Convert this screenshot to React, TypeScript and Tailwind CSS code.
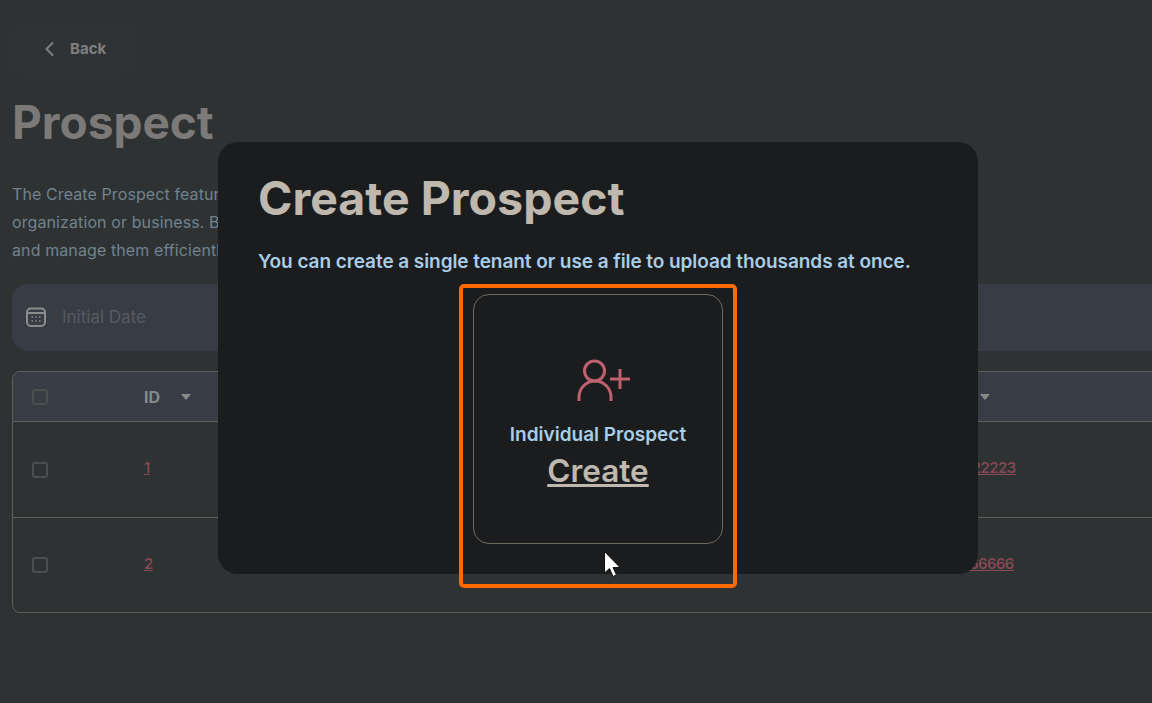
const font = "font-['Inter',sans-serif]"

function Checkbox() {
  return <div className="w-4 h-4 rounded-[3px] border-2 border-[#4a4f50]" />
}

function Caret() {
  return <div className="w-0 h-0 border-x-[5px] border-x-transparent border-t-[6px] border-t-[#8a8a88]" />
}

function Row({ id, phone, height }: { id: string; phone: string; height: string }) {
  return (
    <div className={`flex items-center ${height} border-t border-[#5f605c]`}>
      <div className="w-[131px] pl-[19px] shrink-0"><Checkbox /></div>
      <a className="w-[790px] -mt-0.5 shrink-0 text-[15px] tracking-[-0.5px] font-medium text-[#8a4a55] underline">{id}</a>
      <a className="w-[200px] -mt-0.5 shrink-0 text-[15px] tracking-[-0.5px] font-medium text-[#8a4a55] underline">{phone}</a>
    </div>
  )
}

export default function App() {
  return (
    <div className={`relative w-[1152px] h-[703px] overflow-hidden bg-[#2f3233] ${font}`}>
      {/* Page behind the modal */}
      <div className="w-[1400px] pl-3 pt-6">
        <div className="flex items-center gap-[15px] w-[122px] h-[50px] pl-8 rounded-xl bg-[#303335]">
          <svg width="11" height="16" viewBox="0 0 11 16" fill="none" stroke="#7f7f7f" strokeWidth="2" strokeLinecap="round" strokeLinejoin="round">
            <path d="M8.5 2 L2.5 8 L8.5 14" />
          </svg>
          <span className="text-[15px] font-bold text-[#807f7d]">Back</span>
        </div>

        <h1 className="mt-[18px] text-[46px] leading-[60px] font-bold text-[#7c7a78]">Prospect</h1>

        <p className="mt-[28px] w-[900px] text-[16px] leading-[28px] tracking-[0.1px] text-[#70838f]">
          The Create Prospect feature
          <br />
          organization or business. By
          <br />
          and manage them efficiently
        </p>

        <div className="flex items-center gap-4 mt-5 h-[67px] pl-[14px] rounded-2xl bg-[#383c44]">
          <svg className="-mt-0.5" width="20" height="20" viewBox="0 0 20 20" fill="none" stroke="#8b8d8d" strokeWidth="2">
            <rect x="1" y="1.5" width="18" height="17.5" rx="4" />
            <path d="M1 6h18" />
            <path d="M5.5 10h1.5M9.3 10h1.5M13 10h1.5M5.5 14h1.5M9.3 14h1.5M13 14h1.5" strokeWidth="1.5" />
          </svg>
          <span className="text-[17px] text-[#565b60]">Initial Date</span>
        </div>

        <div className="mt-5 rounded-lg border border-[#5f605c] overflow-hidden">
          <div className="flex items-center h-[49px] bg-[#383c44]">
            <div className="w-[131px] pl-[19px] shrink-0"><Checkbox /></div>
            <div className="flex items-center gap-[21px] w-[700px] shrink-0">
              <span className="text-[16px] font-bold text-[#858a8c]">ID</span>
              <Caret />
            </div>
            <div className="flex items-center justify-end w-[146px] shrink-0"><Caret /></div>
          </div>
          <Row id="1" phone="1122222223" height="h-[96px]" />
          <Row id="2" phone="1116666666" height="h-[95px]" />
        </div>
      </div>

      {/* Modal */}
      <div className="absolute left-[218px] top-[142px] w-[760px] h-[432px] rounded-[20px] bg-[#1b1c1e] pt-[28px] px-10">
        <h2 className="text-[46.5px] leading-[56px] font-bold text-[#bfb8ae]">Create Prospect</h2>
        <p className="mt-[22px] text-[19px] leading-[28px] tracking-[-0.07px] font-semibold text-[#a9cde6] whitespace-nowrap">
          You can create a single tenant or use a file to upload thousands at once.
        </p>
        <div className="flex flex-col items-center mx-auto mt-[18px] w-[250px] h-[250px] rounded-2xl border border-[#6f685f] pt-[64px]">
          <svg className="ml-3" width="54" height="42" viewBox="0 0 54 42" fill="none" stroke="#c0616f" strokeWidth="3">
            <circle cx="17.5" cy="12" r="10" />
            <path d="M2 42 V38 A16 16 0 0 1 34 38 V42" />
            <path d="M33 20 H53 M43 10 V30" />
          </svg>
          <span className="mt-5 text-[19px] leading-7 font-semibold text-[#a9cde6]">Individual Prospect</span>
          <span className="mt-0.5 text-[31.5px] leading-[40px] font-semibold text-[#bfb8ae] underline decoration-[3px]">Create</span>
        </div>
      </div>

      {/* Annotation over the screenshot */}
      <div className="absolute left-[459px] top-[284px] w-[278px] h-[304px] rounded-[5px] border-4 border-[#ff6a00]" />
      <svg className="absolute left-[603px] top-[550px]" width="19" height="28" viewBox="0 0 19 28">
        <path d="M1.5 1.5 V23 L6.5 18.5 L10 26.5 L13.5 25 L10 17.5 H17 Z" fill="#fff" stroke="#111" strokeWidth="1" />
      </svg>
    </div>
  )
}
